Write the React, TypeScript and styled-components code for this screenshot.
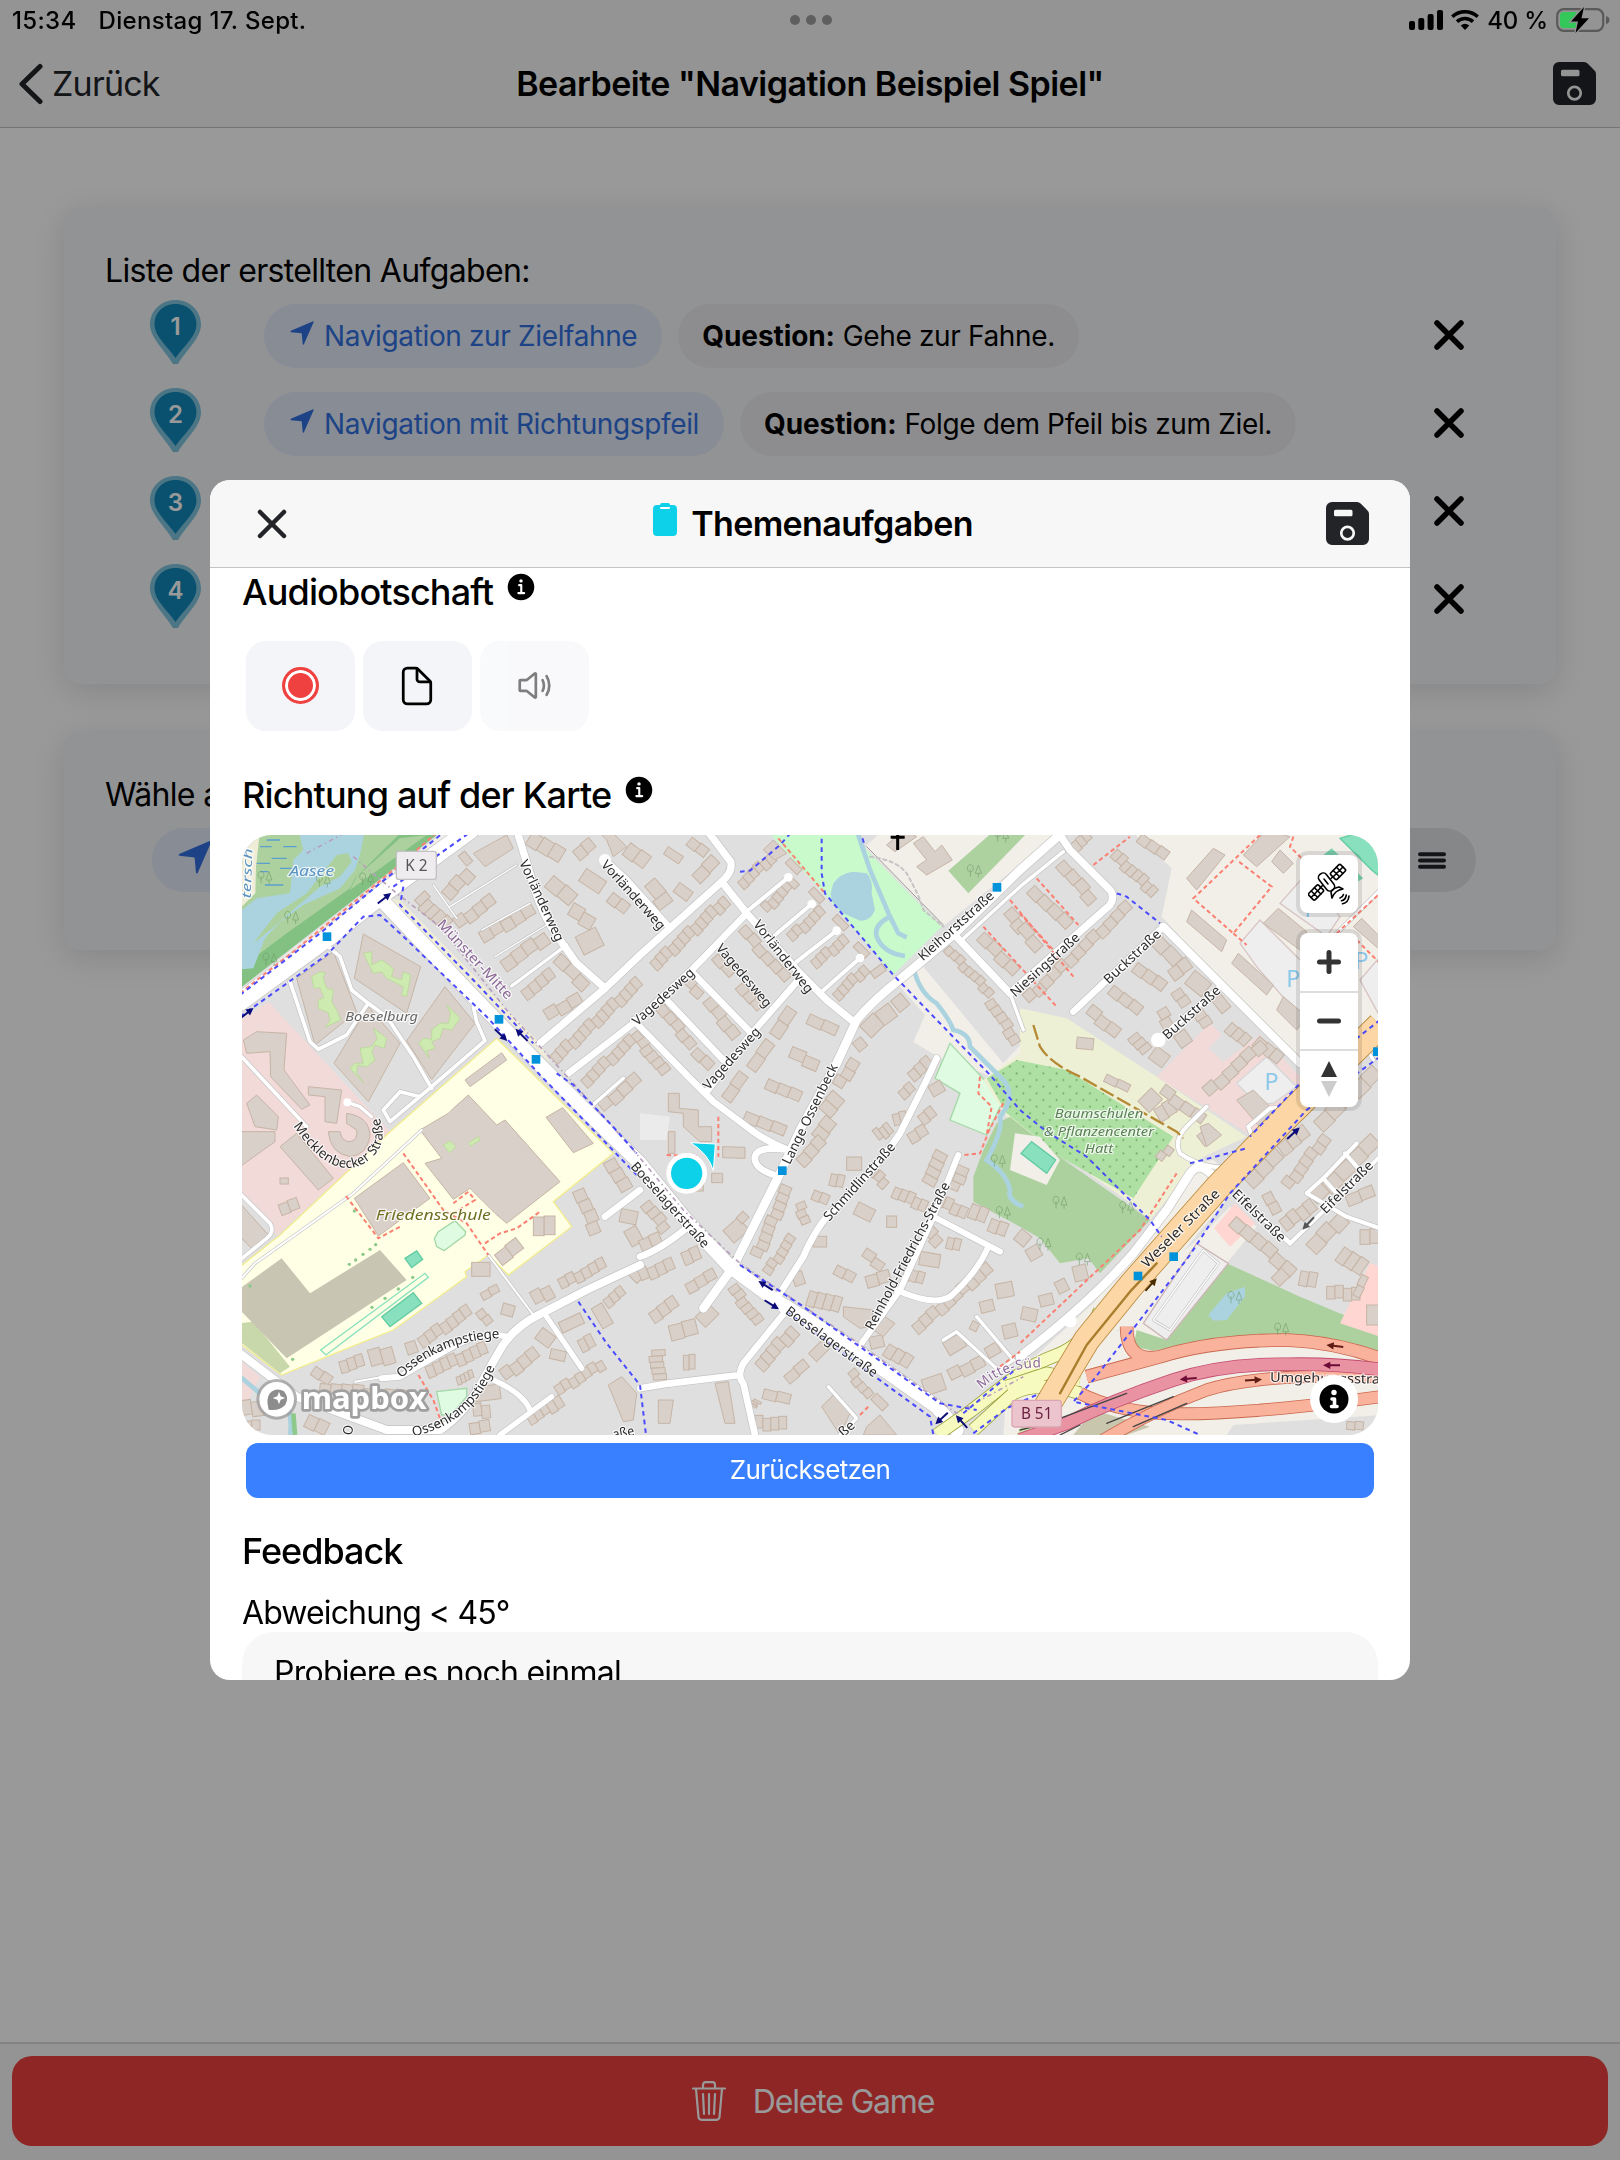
import React from "react";
import styled, { createGlobalStyle, css } from "styled-components";
import { IoDocumentOutline, IoInformationCircle, IoVolumeMediumOutline } from "react-icons/io5";

const GlobalStyle = createGlobalStyle`
  * { box-sizing: border-box; }
  body {
    margin: 0;
    background: #fff;
    color: #000;
    font-family: Inter, "Liberation Sans", sans-serif;
    -webkit-font-smoothing: antialiased;
  }
`;

const Page = styled.div`
  display: flex;
  flex-direction: column;
  height: 2160px;
  overflow: hidden;
`;

const Header = styled.header`
  height: 128px;
  background: #f7f7f7;
  border-bottom: 1px solid #c4c4c4;
`;

const StatusBar = styled.div`
  position: relative;
  z-index: 3;
  display: grid;
  grid-template-columns: 1fr auto 1fr;
  align-items: center;
  height: 40px;
  padding: 0 10px 0 12px;
  font-size: 24px;
  font-weight: 500;
`;

const StatusGroup = styled.div<{ $gap: number; $end?: boolean }>`
  display: flex;
  align-items: center;
  gap: ${(p) => p.$gap}px;
  justify-content: ${(p) => (p.$end ? "flex-end" : "flex-start")};
  letter-spacing: ${(p) => (p.$end ? -0.2 : 0.33)}px;
  white-space: nowrap;
`;

const Dot = styled.i`
  width: 10px;
  height: 10px;
  border-radius: 50%;
  background: #5f5f5f;
`;

const NavBar = styled.div`
  display: grid;
  grid-template-columns: 1fr auto 1fr;
  align-items: center;
  height: 87px;
  padding: 0 24px 0 18px;
`;

const BackButton = styled.div`
  display: flex;
  align-items: center;
  gap: 8px;
  color: #222428;
  font-size: 34px;
  letter-spacing: -0.8px;
`;

const BarTitle = styled.h1<{ $spacing: number; $shift: number }>`
  display: flex;
  align-items: center;
  margin: 0 0 0 ${(p) => p.$shift}px;
  font-size: 34px;
  font-weight: 600;
  letter-spacing: ${(p) => p.$spacing}px;
  white-space: nowrap;
`;

const BarEnd = styled.div`
  display: flex;
  justify-content: flex-end;
`;

const Content = styled.main`
  display: flex;
  flex: 1;
  flex-direction: column;
  gap: 47px;
  padding: 79px 64px 0;
`;

const Card = styled.section<{ $height: number; $top: number }>`
  height: ${(p) => p.$height}px;
  padding: ${(p) => p.$top}px 42px 0 41px;
  border-radius: 16px;
  background: #f4f5f8;
  box-shadow: 0 8px 32px rgba(0, 0, 0, 0.12);
`;

const CardLabel = styled.div`
  height: 44px;
  font-size: 32px;
  line-height: 46px;
  letter-spacing: -0.67px;
  white-space: nowrap;
`;

const TaskRow = styled.div`
  display: flex;
  align-items: center;
  height: 88px;
  padding: 0 50px 2px 45px;
`;

const PinIcon = styled.svg`
  flex: none;
  width: 51px;
  height: 64px;
  margin: -6px 63px 0 0;
`;

const Chips = styled.div`
  display: flex;
  gap: 16px;
  margin: 2px auto 0 0;
`;

const Chip = styled.div<{ $primary?: boolean; $width?: number }>`
  display: flex;
  align-items: center;
  gap: 8px;
  height: 64px;
  padding: 0 24px 1px;
  border-radius: 32px;
  background: rgba(0, 0, 0, 0.035);
  font-size: 28px;
  letter-spacing: -0.36px;
  white-space: nowrap;

  b { letter-spacing: -0.1px; }

  ${(p) =>
    p.$primary &&
    css`
      gap: 10px;
      padding: 0 25px 1px 26px;
      background: rgba(56, 128, 255, 0.1);
      color: #3171e0;
    `}
  ${(p) => p.$width && css`width: ${p.$width}px;`}
`;

const ChipArrow = styled.svg<{ $size: number }>`
  width: ${(p) => p.$size}px;
  height: ${(p) => p.$size}px;
  margin-top: -6px;
`;

const PickerRow = styled.div`
  display: flex;
  justify-content: space-between;
  padding: 12px 38px 0 47px;
`;

const MenuChip = styled(Chip)`
  justify-content: flex-end;
  width: 200px;
  padding: 0 30px;
  background: rgba(0, 0, 0, 0.08);
`;

const Footer = styled.footer`
  height: 118px;
  padding: 12px;
  border-top: 2px solid #dadada;
  background: #f7f7f7;
`;

const DeleteButton = styled.div`
  display: flex;
  align-items: center;
  justify-content: center;
  gap: 27px;
  height: 90px;
  padding-left: 6px;
  border-radius: 20px;
  background: #ed4040;
  color: #fff;
  font-size: 32px;
  letter-spacing: -1.2px;
`;

const Backdrop = styled.div`
  position: fixed;
  inset: 0;
  z-index: 2;
  display: flex;
  align-items: center;
  justify-content: center;
  background: rgba(0, 0, 0, 0.4);
`;

const Modal = styled.div`
  width: 1200px;
  height: 1200px;
  overflow: hidden;
  border-radius: 20px;
  background: #fff;
`;

const ModalHeader = styled.div`
  display: grid;
  grid-template-columns: 1fr auto 1fr;
  align-items: center;
  height: 88px;
  padding: 0 41px 0 47px;
  border-bottom: 1px solid #c4c4c4;
  background: #f7f7f7;
`;

const Clipboard = styled.svg`
  width: 24px;
  height: 33px;
  margin: -9px 14px 0 0;
`;

const ModalBody = styled.div`
  display: flex;
  flex-direction: column;
  padding: 0 32px;
`;

const SectionTitle = styled.h2<{ $top: number; $spacing: number }>`
  display: flex;
  align-items: center;
  gap: 11px;
  margin: ${(p) => p.$top}px 0 0;
  font-size: 36px;
  font-weight: 500;
  line-height: 48px;
  letter-spacing: ${(p) => p.$spacing}px;

  svg { margin-top: -11px; }
`;

const AudioRow = styled.div`
  display: flex;
  gap: 8px;
  margin: 25px 4px 0;
`;

const AudioButton = styled.div<{ $disabled?: boolean }>`
  display: flex;
  align-items: center;
  justify-content: center;
  width: 109px;
  height: 90px;
  padding: 0 1px 1px 0;
  border-radius: 20px;
  background: #f4f5f8;
  opacity: ${(p) => (p.$disabled ? 0.5 : 1)};
`;

const RecordDot = styled.i`
  width: 37px;
  height: 37px;
  border: 3px solid #f04141;
  border-radius: 50%;
  background: #f04141;
  box-shadow: inset 0 0 0 3px #fff;
`;

const MapFrame = styled.div`
  position: relative;
  height: 600px;
  margin-top: 16px;
  overflow: hidden;
  border-radius: 30px;
`;

const MapCanvas = styled.svg`
  display: block;
  width: 1136px;
  height: 600px;
  font-family: "Noto Sans", "Open Sans", sans-serif;
`;

const MapControls = styled.div`
  position: absolute;
  top: 20px;
  right: 20px;
  display: flex;
  flex-direction: column;
  gap: 20px;
`;

const ControlGroup = styled.div`
  display: flex;
  flex-direction: column;
  width: 58px;
  border-radius: 8px;
  background: #fff;
  box-shadow: 0 0 0 4px rgba(0, 0, 0, 0.1);
`;

const Control = styled.div`
  display: flex;
  align-items: center;
  justify-content: center;
  height: 58px;

  & + & { border-top: 2px solid #ddd; }
`;

const MapInfo = styled.div`
  position: absolute;
  right: 20px;
  bottom: 12px;
  display: flex;
  align-items: center;
  justify-content: center;
  width: 48px;
  height: 48px;
  border-radius: 50%;
  background: #fff;
`;

const ResetButton = styled.div`
  height: 55px;
  margin: 8px 4px 0;
  border-radius: 12px;
  background: #3880ff;
  color: #fff;
  font-size: 26px;
  line-height: 54px;
  letter-spacing: -0.6px;
  text-align: center;
`;

const FieldLabel = styled.div`
  height: 40px;
  margin-top: 17px;
  font-size: 32px;
  line-height: 42px;
  letter-spacing: -0.88px;
`;

const FieldBox = styled.div`
  height: 120px;
  padding: 21px 32px;
  border-radius: 32px;
  background: #f7f7f7;
  font-size: 32px;
  line-height: 40px;
  letter-spacing: -0.75px;
`;

const SaveIcon = () => (
  <svg width="43" height="43" viewBox="0 0 43 43">
    <path
      fillRule="evenodd"
      fill="#222428"
      d="M6 0H31a5 5 0 0 1 3.600 1.500L41.500 8.400A5 5 0 0 1 43 12V37a6 6 0 0 1-6 6H6a6 6 0 0 1-6-6V6A6 6 0 0 1 6 0ZM9.500 7.800a1.500 1.500 0 0 0-1.500 1.500v3.400a1.500 1.500 0 0 0 1.500 1.500H25a1.500 1.500 0 0 0 1.500-1.500V9.300a1.500 1.500 0 0 0-1.500-1.500ZM21.500 23.500a7.600 7.600 0 1 0 0 15.200 7.600 7.600 0 1 0 0-15.200ZM21.500 26.200a4.900 4.900 0 1 1 0 9.800 4.900 4.900 0 1 1 0-9.800Z"
    />
  </svg>
);

const Cross = ({ size, color, width }: { size: number; color: string; width: number }) => (
  <svg width={size} height={size} viewBox={`0 0 ${size} ${size}`}>
    <path
      d={`M3 3L${size - 3} ${size - 3}M${size - 3} 3L3 ${size - 3}`}
      stroke={color}
      strokeWidth={width}
      strokeLinecap="round"
    />
  </svg>
);

const Arrow = ({ size }: { size: number }) => (
  <ChipArrow $size={size} viewBox="0 0 24 24">
    <path d="M.8 9.800L23.200.3Q24 0 23.700.9L13.800 23.500Q12.900 24 12.700 23L11.700 12.300 1 11.200Q0 10.500.8 9.800Z" fill="#3171e0" />
  </ChipArrow>
);

const Pin = ({ n }: { n: number }) => (
  <PinIcon viewBox="0 0 51 64">
    <path d="M25.500 0C11.500 0 0 10.500 0 24.500 0 38 14 49 23 64H28C37 49 51 38 51 24.500 51 10.500 39.500 0 25.500 0Z" fill="#7fc4de" />
    <path d="M25.500 4C13.500 4 4.500 12.500 4.500 24.500 4.500 36 17 46 25.500 58 34 46 46.500 36 46.500 24.500 46.500 12.500 37.500 4 25.500 4Z" fill="#1088ba" />
    <text x="25.500" y="34.500" fill="#fff" fontSize="24" fontWeight="600" textAnchor="middle">{n}</text>
  </PinIcon>
);

/* ---------- map data, in thirds of a pixel ---------- */

type Area = [fill: string, points: string, stroke?: string];

const AREAS: Area[] = [
  ["#add19e", "0,0 590,0 0,470"],
  ["#83c183", "490,0 610,0 0,475 0,415 140,310 330,175 345,145"],
  ["#add19e", "480,25 560,15 330,180 350,140"],
  ["#f2efe9", "0,480 600,15 700,0 0,540"],
  ["#efedd8", "0,0 60,0 48,110 46,190 0,235"],
  ["#aad3df", "175,0 375,0 360,75 345,120 300,175 190,225 120,275 75,325 40,415 0,418 0,245 50,205 150,190 160,90 190,60"],
  ["#add19e", "290,75 325,70 335,95 300,140 240,170 90,300 40,340 110,250 200,190"],
  ["#efedd8", "440,205 480,210 900,640 930,700 560,320 430,220"],
  ["#f2dad9", "0,570 85,515 450,905 110,1218 90,1190 0,1080"],
  ["#ffffe5", "770,625 1120,970 940,1115 995,1190 805,1335 745,1275 675,1325 680,1340 460,1500 285,1570 125,1635 0,1540 0,1310 120,1215 450,905", "#f2ec90"],
  ["#c8d8ab", "0,1480 40,1475 150,1610 120,1630 0,1535"],
  ["#f2dad9", "0,1590 60,1640 20,1720 0,1720"],
  ["#c8c6b2", "125,1285 210,1390 420,1260 500,1350 140,1585 0,1440 0,1375"],
  ["#c8facc", "1580,0 1840,0 1880,60 2105,290 1960,435 1760,200"],
  ["#f2efe9", "1875,50 1930,0 2470,0 2110,288"],
  ["#aed1a0", "2125,122 2265,0 2370,0 2185,190"],
  ["#f2efe9", "2040,395 2140,460 2300,600 2540,700 2520,920 2230,730 2110,690 2020,635 2055,555 1980,470"],
  ["#dfdfdf", "2050,410 2170,330 2360,520 2365,620 2290,700"],
  ["#dffce2", "2130,640 2290,810 2240,915 2130,870 2160,790 2085,745", "#a5d8a8"],
  ["#eef0d5", "2340,535 2480,565 2750,740 3020,920 2890,980 2730,1170 2660,1110 2300,860 2230,750 2340,670"],
  ["#aedfa3", "2240,745 2330,690 2480,720 2800,920 2680,1105 2460,980 2300,850"],
  ["#add19e", "2200,1115 2200,1040 2230,960 2270,880 2310,860 2465,985 2730,1170 2580,1330 2545,1285 2460,1300 2400,1225 2340,1190"],
  ["#f2efe9", "2325,910 2400,920 2460,990 2420,1065 2310,1020"],
  ["#88e0be", "2375,935 2447,990 2420,1030 2343,970", "#62cba2"],
  ["#f2efe9", "2670,0 3420,0 3420,580 3170,700 2765,260 2795,115"],
  ["#f2dad9", "2750,740 2910,580 2945,615 2905,655 2950,695 3060,615 3190,750 3040,920"],
  ["#f2efe9", "2870,1000 2920,990 3000,1060 2600,1540 2340,1620 2560,1420 2790,1130"],
  ["#f2efe9", "2550,1480 2860,1240 2970,1130 3050,1190 2960,1300 2780,1530"],
  ["#ffd6d1", "2985,1120 3045,1180 2970,1250 2922,1195"],
  ["#f2efe9", "2290,1815 2300,1660 2640,1500 3420,1520 3420,1815"],
  ["#add19e", "2960,1300 3180,1400 3420,1500 3420,1590 3140,1525 2900,1535 2740,1562 2680,1550 2690,1500 2780,1530"],
  ["#ffd6d1", "3390,1300 3420,1310 3420,1520 3300,1480"],
  ["#cfe7b0", "2330,1815 2400,1690 2480,1690 2430,1815"],
  ["#c9c6ae", "2560,1740 2730,1790 2660,1815 2500,1815"],
  ["#dfdfdf", "2980,1785 3420,1755 3420,1815 2960,1815"],
  ["#eeeeee", "2710,1480 2870,1240 2965,1300 2780,1530", "#cdb6b6"],
  ["#eeeeee", "3000,340 3060,270 3190,400 3280,480 3180,560 3050,410", "#d8c4c4"],
  ["#eeeeee", "3120,220 3200,130 3300,260 3260,320", "#d8c4c4"],
  ["#eeeeee", "2990,760 3080,680 3170,770 3100,820 3050,820", "#d6d6d6"],
  ["#eeeeee", "3360,450 3420,380 3420,560", "#d8c4c4"],
  ["#88e0be", "3300,25 3350,10 3420,60 3420,140 3395,120", "#62cba2"],
  ["#7dd3b0", "3250,75 3275,55 3370,145 3345,160"],
  ["#ebebeb", "1200,850 1290,860 1280,930 1200,930"],
  ["#88e0be", "425,1460 520,1388 545,1420 450,1490", "#62cba2"],
  ["#88e0be", "495,1285 530,1263 548,1288 515,1313", "#62cba2"],
  ["none", "242,1560 555,1330 565,1342 258,1575", "#88e0be"],
  ["#dffce2", "583,1225 595,1205 645,1172 677,1205 675,1215 612,1262 590,1250", "#a5d8a8"],
  ["#dffce2", "590,1685 680,1675 680,1700 635,1752 605,1755", "#a5d8a8"],
  ["#aad3df", "2905,1455 2960,1390 3015,1370 3015,1400 2960,1470 2920,1472"],
];

const BLOCKS = [
  "370,312 542,410 500,550 343,445",
  "280,365 350,545 225,645 170,445",
  "385,530 480,640 385,815 282,700",
  "615,470 705,580 575,748 500,632",
  "10,630 50,605 140,610 132,720 210,825 185,838 92,740 90,665 20,670",
  "20,820 50,795 115,860 110,900 45,890",
  "205,770 305,780 290,880 255,875 255,800 205,795",
  "0,905 105,905 105,935 0,1010",
  "120,950 170,910 280,1045 235,1080",
  "0,1120 90,1220 40,1260 0,1220",
  "540,900 625,850 640,835 685,795 770,885 795,870 960,1055 800,1180 765,1150 690,1075 640,1108 555,1000 605,985",
  "490,998 570,1105 415,1218 343,1105",
  "675,750 785,668 800,690 690,770",
  "918,862 968,833 1060,940 1000,968",
  "1285,790 1318,790 1318,835 1375,840 1375,890 1415,890 1415,935 1380,935 1330,890 1330,850 1285,845",
  "1285,905 1305,905 1305,970 1285,970",
  "1448,950 1515,952 1515,985 1448,983",
  "1415,1030 1448,1030 1448,1058 1415,1058",
  "2030,110 2060,90 2020,40 2050,20 2085,65 2105,45 2137,90 2060,135",
  "1940,45 1990,0 2030,20 1965,65",
  "1570,60 1600,30 1640,70 1605,90",
  "1100,30 1080,10 1110,0 1160,50 1120,80",
  "700,70 800,15 820,55 735,110",
  "1105,1665 1145,1640 1190,1690 1180,1770 1150,1775",
  "1255,1710 1300,1710 1290,1780 1255,1780",
  "1425,1660 1465,1655 1485,1780 1455,1780",
  "1745,1730 1785,1690 1830,1750 1800,1815",
  "1880,1790 1920,1755 1970,1815 1870,1815",
  "1810,1430 1900,1440 1890,1490 1860,1495 1810,1460",
  "1920,1450 1965,1480 1930,1520 1900,1500",
  "2990,810 3040,780 3130,870 3080,915",
  "2840,145 2920,55 2955,75 2870,180",
  "2855,240 2960,330 2945,365 2840,275",
  "2995,370 3100,465 3080,495 2975,400",
  "3070,280 3115,235 3200,305 3180,360",
  "3010,75 3080,0 3150,20 3050,110",
  "3095,95 3120,60 3160,100 3130,130",
  "3110,540 3130,500 3200,560 3170,600",
  "3340,290 3365,265 3420,320 3420,360",
  "2880,890 2905,880 2945,915 2900,950",
];

const LAWNS = [
  "370,370 395,365 395,405 425,390 460,415 455,440 485,450 490,425 512,435 500,500 485,495 490,470 440,445 425,425 400,430",
  "215,440 240,425 255,428 250,445 260,475 280,480 275,515 290,540 302,570 255,592 270,572 265,548 235,535 235,510 252,503 240,473 222,475",
  "400,595 440,625 432,655 405,645 395,665 405,690 380,710 352,705 350,730 372,760 330,715 345,700 370,700 360,655 395,650 412,625",
  "620,525 660,565 635,600 608,595 600,625 575,635 585,655 560,662 568,685 537,640 550,625 575,628 575,600 600,580 625,580 632,550",
  "610,945 630,932 648,950 628,968",
  "685,940 715,920 720,930 692,948",
];

/* x1, y1, x2, y2, number of houses, depth */
type HouseRow = [number, number, number, number, number, number];

const HOUSES: HouseRow[] = [
  [535, 200, 620, 290, 5, 42], [620, 200, 690, 125, 3, 38], [665, 70, 690, 100, 1, 24], [870, 20, 965, 80, 3, 45],
  [650, 285, 760, 205, 4, 34], [725, 325, 880, 235, 5, 36], [790, 410, 920, 320, 4, 38], [850, 495, 940, 430, 4, 34],
  [920, 560, 1020, 500, 3, 34], [950, 385, 1040, 470, 3, 36], [940, 690, 1200, 455, 15, 34], [930, 150, 1000, 210, 2, 44],
  [990, 240, 1060, 280, 2, 40], [1020, 350, 1080, 320, 1, 60], [1110, 200, 1160, 240, 2, 34], [1030, 760, 1200, 610, 9, 32],
  [1085, 835, 1195, 740, 4, 34], [1010, 80, 1060, 40, 2, 36], [1160, 55, 1220, 100, 2, 44], [1030, 130, 1090, 170, 1, 44],
  [1225, 160, 1260, 200, 1, 40], [1370, 150, 1430, 90, 2, 36], [1310, 170, 1350, 200, 1, 34], [1350, 30, 1400, 70, 2, 30],
  [1275, 65, 1320, 95, 1, 26], [1250, 230, 1290, 200, 1, 34], [1240, 410, 1460, 210, 13, 34], [1500, 165, 1600, 80, 6, 30],
  [1575, 240, 1665, 150, 6, 30], [1650, 325, 1750, 240, 6, 30], [1720, 405, 1820, 325, 6, 30], [1785, 500, 1880, 415, 6, 30],
  [1640, 95, 1675, 130, 1, 22], [1712, 180, 1745, 215, 1, 22], [1785, 260, 1820, 295, 1, 22], [1850, 340, 1885, 375, 1, 22],
  [1900, 440, 1935, 415, 1, 24], [1505, 295, 1640, 450, 6, 30], [1425, 380, 1475, 435, 2, 26], [1500, 465, 1560, 535, 3, 30],
  [1335, 450, 1385, 495, 2, 28], [1400, 510, 1490, 620, 4, 34], [1260, 530, 1360, 650, 5, 30], [1365, 660, 1415, 710, 2, 30],
  [1200, 630, 1275, 730, 5, 34], [1605, 620, 1660, 540, 2, 36], [1705, 565, 1790, 605, 2, 32], [1530, 715, 1590, 635, 2, 34],
  [1650, 670, 1735, 705, 2, 34], [1460, 810, 1515, 735, 2, 34], [1580, 760, 1680, 805, 3, 32], [1515, 855, 1635, 905, 3, 32],
  [1880, 610, 1920, 570, 1, 50], [1920, 570, 1960, 540, 1, 48], [1965, 530, 1995, 505, 1, 44], [1845, 650, 1870, 630, 1, 34],
  [1795, 770, 1845, 690, 3, 34], [1755, 850, 1800, 800, 2, 48], [1730, 925, 1775, 870, 2, 42], [2010, 740, 2070, 690, 3, 34],
  [2075, 790, 2110, 770, 1, 36], [1985, 800, 2020, 770, 2, 30], [1960, 870, 2000, 860, 2, 34], [2040, 870, 2080, 840, 2, 34],
  [1910, 920, 1950, 890, 3, 36], [2010, 930, 2060, 900, 2, 34], [2120, 355, 2255, 495, 9, 26], [2250, 510, 2330, 640, 6, 30],
  [2300, 245, 2350, 300, 2, 34], [2220, 320, 2330, 425, 4, 34], [2460, 100, 2560, 215, 4, 34], [2375, 175, 2485, 290, 4, 34],
  [2340, 290, 2400, 355, 2, 34], [2620, 70, 2745, 190, 8, 32], [2500, 55, 2550, 15, 3, 32], [2700, 20, 2780, 80, 3, 30],
  [2360, 510, 2670, 225, 13, 32], [2740, 325, 2810, 400, 2, 40], [2685, 410, 2770, 475, 3, 34], [2615, 475, 2700, 545, 3, 32],
  [2545, 540, 2635, 610, 3, 34], [2795, 440, 2850, 400, 2, 38], [2850, 440, 2900, 480, 1, 50], [2810, 480, 2840, 525, 2, 34],
  [2760, 540, 2790, 590, 2, 32], [2870, 545, 2900, 590, 2, 34], [2920, 490, 2960, 540, 1, 34], [2680, 615, 2720, 665, 3, 36],
  [2735, 670, 2775, 700, 1, 44], [2815, 610, 2840, 645, 1, 40], [2965, 590, 3020, 640, 3, 36], [3050, 630, 3120, 690, 3, 36],
  [2900, 790, 3070, 640, 6, 34], [2510, 640, 2560, 645, 1, 34], [2710, 830, 2750, 790, 1, 48], [2750, 855, 2800, 825, 2, 44],
  [2765, 780, 2890, 870, 4, 32], [2595, 745, 2665, 780, 2, 24], [3235, 890, 3410, 720, 5, 44],
  [300, 1610, 370, 1590, 3, 36], [390, 1590, 460, 1570, 2, 50], [500, 1560, 530, 1550, 1, 36], [540, 1540, 690, 1440, 7, 34],
  [560, 1625, 740, 1555, 8, 36], [880, 1410, 935, 1380, 2, 40], [960, 1365, 1095, 1300, 6, 32], [1015, 1080, 1070, 1210, 4, 36],
  [1110, 990, 1160, 1080, 3, 38], [1140, 1160, 1190, 1170, 1, 40], [1165, 1230, 1200, 1210, 1, 52], [725, 1400, 775, 1375, 2, 24],
  [720, 1440, 750, 1480, 2, 26], [785, 1440, 820, 1450, 1, 34], [695, 1320, 750, 1320, 1, 42], [775, 1290, 840, 1240, 2, 40],
  [880, 1185, 945, 1185, 2, 56], [790, 1640, 890, 1565, 4, 36], [950, 1685, 1090, 1600, 7, 30], [865, 1770, 965, 1710, 5, 36],
  [700, 1690, 780, 1680, 1, 44], [700, 1745, 750, 1740, 2, 38], [690, 1800, 750, 1790, 2, 34], [220, 1620, 270, 1655, 2, 30],
  [240, 1670, 500, 1700, 8, 28], [0, 1740, 70, 1730, 2, 44], [10, 1790, 60, 1790, 2, 30], [200, 1770, 260, 1800, 2, 40],
  [960, 1490, 1025, 1460, 1, 34], [1065, 1430, 1100, 1490, 1, 36], [895, 1510, 935, 1540, 1, 40], [1020, 1550, 1060, 1530, 2, 40],
  [1095, 1420, 1150, 1380, 3, 30], [1180, 1350, 1200, 1330, 1, 40], [120, 1055, 145, 1055, 1, 18], [120, 1140, 175, 1120, 2, 34],
  [650, 1650, 700, 1635, 4, 24], [930, 1575, 975, 1585, 1, 30], [1330, 1070, 1390, 1070, 1, 30],
  [1215, 1120, 1280, 1200, 4, 34], [1200, 1245, 1260, 1220, 2, 34], [1200, 1340, 1300, 1300, 4, 36], [1330, 1290, 1380, 1270, 2, 40],
  [1235, 1465, 1310, 1415, 3, 36], [1340, 1375, 1425, 1330, 3, 32], [1385, 1480, 1425, 1440, 1, 44], [1475, 1370, 1555, 1480, 6, 32],
  [1465, 1220, 1510, 1180, 1, 50], [1495, 1170, 1515, 1150, 1, 26], [1550, 1280, 1645, 1070, 9, 34], [1580, 1330, 1660, 1220, 6, 28],
  [1290, 1510, 1370, 1490, 2, 46], [1555, 1610, 1665, 1500, 6, 38], [1250, 1560, 1255, 1650, 5, 40], [1330, 1600, 1365, 1600, 2, 44],
  [1680, 1000, 1750, 930, 3, 36], [1720, 1090, 1765, 1110, 2, 30], [1675, 1120, 1700, 1180, 3, 28], [1770, 1050, 1810, 1060, 2, 36],
  [1820, 1000, 1865, 1000, 1, 40], [1850, 1130, 1900, 1155, 1, 40], [1940, 1180, 1970, 1180, 1, 34], [1890, 1020, 1940, 1065, 3, 30],
  [1960, 1085, 2060, 1130, 5, 34], [2060, 1060, 2110, 970, 4, 40], [2140, 1080, 2170, 1010, 3, 36], [2090, 1110, 2180, 1150, 4, 34],
  [2190, 1140, 2240, 1160, 2, 44], [2250, 1180, 2300, 1200, 2, 40], [1720, 1240, 1760, 1240, 1, 32], [1785, 1320, 1840, 1350, 2, 30],
  [1660, 1350, 1690, 1340, 1, 40], [1705, 1400, 1800, 1430, 4, 46], [1870, 1270, 1930, 1310, 2, 28], [1880, 1360, 1950, 1340, 2, 36],
  [1990, 1330, 2050, 1350, 3, 34], [2040, 1280, 2100, 1290, 1, 40], [2060, 1200, 2100, 1240, 2, 34], [2120, 1240, 2160, 1250, 2, 34],
  [2025, 1500, 2250, 1310, 10, 34], [2220, 1430, 2260, 1420, 1, 34], [2270, 1390, 2320, 1380, 1, 44], [2290, 1510, 2330, 1500, 1, 40],
  [1890, 1540, 1930, 1530, 1, 36], [1940, 1555, 2010, 1600, 3, 40], [1830, 1625, 1890, 1700, 4, 26], [1900, 1700, 1935, 1735, 1, 26],
  [1640, 1650, 1700, 1600, 2, 30], [1715, 1580, 1755, 1540, 1, 34], [1545, 1780, 1640, 1780, 4, 38], [1540, 1730, 1550, 1710, 3, 24],
  [1570, 1690, 1650, 1710, 2, 30], [2050, 1670, 2110, 1650, 1, 50], [2130, 1640, 2230, 1590, 3, 34], [2120, 1560, 2170, 1530, 1, 44],
  [2240, 1570, 2275, 1550, 1, 34], [2195, 1480, 2215, 1490, 1, 26], [2330, 1215, 2360, 1240, 1, 40], [2365, 1280, 2400, 1260, 1, 38],
  [2450, 1375, 2480, 1360, 1, 38], [2500, 1330, 2540, 1320, 1, 46], [2400, 1420, 2440, 1410, 1, 34], [2345, 1450, 2390, 1460, 1, 38],
  [3025, 1060, 3120, 970, 3, 44], [3120, 960, 3200, 900, 3, 40], [3140, 1070, 3260, 920, 7, 34], [3130, 1190, 3220, 1120, 4, 40],
  [3080, 1090, 3110, 1150, 2, 30], [2980, 1170, 3160, 1330, 6, 36], [3220, 1110, 3410, 930, 5, 44], [3215, 1260, 3310, 1160, 3, 44],
  [3300, 1270, 3370, 1320, 3, 50], [3180, 1340, 3230, 1350, 2, 44], [3110, 1360, 3140, 1330, 1, 36], [3260, 1390, 3360, 1390, 4, 38],
  [3360, 1220, 3420, 1220, 2, 44], [3320, 1110, 3400, 1080, 2, 34], [3380, 1460, 3420, 1460, 1, 60], [3350, 1400, 3380, 1340, 2, 22],
  [3320, 1785, 3370, 1790, 2, 24], [2880, 930, 2920, 900, 1, 40], [2760, 990, 2790, 950, 2, 24],
];

type Road = [d: string, width: number];

const ROADS: Road[] = [
  ["M0 515L260 325 430 190 690 0", 54],
  ["M430 215L700 500 880 685 1050 855 1200 1000 1330 1160 1470 1310 1620 1420 1840 1555 2090 1730 2150 1800", 42],
  ["M830 0L870 130Q900 250 960 330L1010 400 1095 475", 22],
  ["M900 640L1095 475 1200 375 1445 155Q1480 125 1472 95L1400 0", 22],
  ["M1095 90L1160 150 1290 295", 20],
  ["M985 730L1180 580 1360 415 1520 250", 20],
  ["M1445 155L1520 250 1680 430 1760 510 1840 575", 22],
  ["M1520 245L1645 142M1605 315L1715 222M1670 395L1790 302M1745 485L1860 384", 12],
  ["M1360 430L1530 605M1285 515L1450 690", 20],
  ["M1400 785L1540 605 1675 450", 20],
  ["M1180 570L1350 745 1420 815 1520 890Q1570 930 1640 958L1590 955Q1540 960 1545 990 1550 1020 1610 1037", 20],
  ["M2470 5L2340 120 2145 310 1990 440Q1900 510 1850 570L1790 700 1680 900 1625 1020 1480 1310 1390 1435", 26],
  ["M2460 15L2490 60 2600 170Q2630 195 2610 225L2480 340 2310 490", 22],
  ["M2135 305L2310 490", 22],
  ["M2160 335L2340 170 2470 65M2310 490L2350 600", 10],
  ["M2770 290L2500 545", 20],
  ["M2770 290L2940 460 3180 700", 24],
  ["M2940 470L2755 630", 16],
  ["M150 455L210 635 235 658 320 615 385 520M260 345L300 380 335 480 385 520 440 560 520 680 575 775M700 530L710 575 735 632 575 770 450 875 430 840 480 785 540 800", 11],
  ["M0 675L200 890M0 1090L90 1180Q105 1205 80 1225L0 1290", 11],
  ["M322 817L360 830 395 860", 10],
  ["M630 230L830 105M725 300L870 220M765 380L920 285M580 165L650 265", 4],
  ["M815 468L980 345", 10],
  ["M1055 828L1150 745", 10],
  ["M1095 1160L1200 1080M1200 1280Q1260 1260 1345 1190", 20],
  ["M2090 685L2060 750 1980 910Q1940 970 1860 1060L1760 1160Q1720 1210 1690 1280L1620 1390", 20],
  ["M1620 1420L1640 1440 1510 1600Q1490 1640 1510 1660L1545 1815M1290 1660L1500 1635", 20],
  ["M1290 1660L1200 1675", 20],
  ["M2155 975L2080 1160 1980 1380 1850 1560", 18],
  ["M2080 1160L2280 1265M2245 1250Q2210 1330 2130 1400 2080 1430 1970 1380", 18],
  ["M1200 1305L1040 1380 905 1450Q820 1490 780 1560L740 1630Q680 1750 600 1800L440 1800 170 1700 0 1570", 24],
  ["M800 1520Q720 1500 620 1560L480 1640 425 1645", 18],
  ["M920 1460L1025 1615M760 1650Q850 1690 870 1740M780 1815L935 1700", 16],
  ["M345 1655L430 1640M745 1275L880 1455M545 900L340 1090 45 1300 0 1350", 6],
  ["M1765 1670L1850 1765 1800 1815M2110 1530L2150 1505 2280 1625M2210 1460L2320 1590 2270 1625", 10],
  ["M2920 1040Q2880 990 2850 1030L2780 1140 2680 1270Q2550 1420 2340 1580", 26],
  ["M3025 1020L2920 1010Q2860 1000 2820 970 2800 930 2840 890L2900 830M3040 930L3025 890 3090 835 3170 830", 12],
  ["M3150 1240L2990 1090", 14],
  ["M3150 1240L3420 980M3200 1090L3250 1045 3350 940M3200 1090L3320 1160 3420 1195M3250 1045L3290 1090M3315 970L3350 1010", 12],
  ["M3280 320L3420 180", 10],
  ["M3420 600L3370 640 3400 690", 10],
  ["M2740 1470L2890 1260 2935 1300 2790 1500Z", 4],
];

const TURNING = [[1095, 90, 18], [1645, 142, 13], [1715, 222, 13], [1790, 302, 13], [1860, 384, 13], [2755, 630, 22], [2490, 1472, 20], [322, 817, 12]];

type Major = [d: string, width: number, fill: string, edge: string];

const MAJORS: Major[] = [
  ["M2090 1815L2190 1745 2300 1660Q2380 1600 2450 1575 2540 1540 2580 1440", 36, "#f7fabf", "#9aa33a"],
  ["M2200 1800L2320 1690Q2400 1650 2520 1690M2300 1670L2420 1630 2520 1650", 36, "#f7fabf", "#9aa33a"],
  ["M2540 1640L2760 1580Q2920 1530 3140 1530 3280 1535 3420 1585M2660 1490Q2660 1600 2760 1580", 36, "#f9b29c", "#c9674e"],
  ["M2520 1690Q2620 1740 2760 1750 2980 1760 3420 1700", 34, "#f9b29c", "#c9674e"],
  ["M2590 1830Q2740 1740 2900 1680 3050 1630 3420 1640", 34, "#f9b29c", "#c9674e"],
  ["M2340 1830L2480 1780Q2620 1710 2800 1650 2950 1600 3140 1603 3280 1600 3420 1618", 36, "#e892a2", "#c24a6e"],
  ["M3420 585L3120 880 2930 1075 2670 1370 2540 1530 2420 1730", 76, "#fcd6a4", "#b98a3e"],
];

const CYCLE = [
  "M0 560L260 375 370 260 420 255 480 310 740 560 900 735 1060 900 1200 1045",
  "M0 495L240 310 420 160 620 0", "M460 170L700 0", "M490 170L480 225 700 450 880 640",
  "M950 730L1000 765 1110 880 1190 970", "M1500 125L1530 122 1620 45 1660 0M1745 0L1745 130 1755 190 1960 435 2250 735 2340 840 2420 905 2540 980 2730 1170 2765 1220",
  "M1860 0L1875 50", "M2630 190L2660 200 2760 280", "M1015 1415L1100 1540 1200 1665 1218 1815",
  "M1500 1305L1690 1430 2100 1720 2210 1740M1640 1445L1850 1600 2070 1760 2080 1815", "M2170 1750L2330 1615M2200 1810L2300 1735 2400 1690",
  "M3420 570L3180 760 3030 920M3420 680L3200 840 2970 1090 2850 1275 2700 1470 2560 1650 2500 1715 2600 1735 2780 1770 2880 1815", "M2850 1000L3020 955",
];

const FOOT = [
  "M0 490L160 365 460 120 600 0", "M490 970L610 1140 680 1180 745 1275M318 1098L415 1225 480 1190M640 1120L685 1085 705 1110 640 1150M735 1240L780 1210 830 1195 900 1145",
  "M535 1635L580 1710 605 1780", "M1435 860L1435 980M1280 975L1370 978", "M1615 25L1755 190", "M2310 210L2500 440M2230 290L2450 530M2390 145L2515 285",
  "M2340 250L2440 360", "M2560 105L2670 20", "M3060 15L2860 205 2980 310 3095 170 2990 90M3160 20L3150 50 3190 90", "M2980 310L3020 345M3290 310L3420 190M3350 330L3420 400",
  "M2810 1030L2700 1200 2340 1540", "M2220 740L2215 790 2255 830 2240 915M2290 820L2240 915M2240 920L2220 970 2170 975", "M1860 1755L1890 1725", "M2280 1610L2340 1565",
];

const BOUNDARY = ["M200 70L330 0M340 80L470 190 600 290 800 540 1000 760 1180 960 1330 1140 1500 1300 1840 1530 2150 1750 2350 1640"];

const WATERLINES = [
  "M1850 0L1890 120 1950 260 1975 310 2000 322M1950 260Q1900 285 1910 320 1930 370 1995 378",
  "M2022 420Q2040 490 2090 520 2130 570 2140 600 2190 610 2190 650 2240 700 2290 750 2330 800 2280 860 2290 900 2240 990 2300 1030 2310 1080 2300 1110 2350 1130 2390 1170",
];

type Label = [text: string, x: number, y: number, angle: number, length: number, size?: number, color?: string, italic?: boolean];

const LABELS: Label[] = [
  ["Vorländerweg", 905, 212, 65, 265],
  ["Vorländerweg", 1180, 195, 48, 265],
  ["Vorländerweg", 1630, 380, 52, 265],
  ["Vagedesweg", 1512, 437, 50, 235],
  ["Vagedesweg", 1270, 500, -42, 235],
  ["Vagedesweg", 1475, 685, -48, 235],
  ["Kleihorststraße", 2148, 288, -42, 290],
  ["Lange Ossenbeck", 1710, 852, -64, 330],
  ["Niesingstraße", 2415, 405, -42, 265],
  ["Buckstraße", 2677, 380, -43, 218],
  ["Buckstraße", 2855, 548, -42, 218],
  ["Boeselagerstraße", 1290, 1125, 48, 330],
  ["Boeselagerstraße", 1775, 1535, 36, 330],
  ["Schmidlinstraße", 1858, 1055, -48, 300],
  ["Reinhold-Friedrichs-Straße", 2003, 1278, -62, 495],
  ["Weseler Straße", 2822, 1195, -45, 312],
  ["Eifelstraße", 3057, 1157, 44, 205],
  ["Eifelstraße", 3320, 1072, -45, 205],
  ["ße", 1820, 1796, -42, 50],
  ["aße", 1150, 1808, -10, 65],
  ["O", 325, 1800, -80, 30],
  ["Umgehungsstra", 3255, 1645, 1, 330],
  ["Boeselburg", 425, 562, 0, 218, 36, "#666", true],
  ["Münster-Mitte", 705, 388, 47, 310, 42, "#8d6a97"],
  ["Aasee", 215, 125, 0, 135, 42, "#5b93c2", true],
  ["tersch", 22, 130, -88, 150, 38, "#5b93c2", true],
  ["Friedensschule", 580, 1155, 0, 345, 42, "#6f6f20", true],
  ["Baumschulen", 2577, 853, 0, 265, 36, "#5a8055", true],
  ["& Pflanzencenter", 2577, 905, 0, 330, 36, "#5a8055", true],
  ["Hatt", 2577, 957, 0, 85, 36, "#5a8055", true],
];

const STOPS = [[261, 320], [777, 568], [888, 688], [2271, 172], [1627, 1022], [2694, 1338], [2801, 1280], [3412, 665]];

/* x, y, angle, colour */
const ONEWAY: [number, number, number, string][] = [
  [433, 205, -38, "#0b0b7a"], [20, 550, -38, "#0b0b7a"], [783, 615, 43, "#0b0b7a"], [845, 615, 225, "#0b0b7a"],
  [1577, 1367, 213, "#0b0b7a"], [1595, 1424, 32, "#0b0b7a"], [2105, 1765, 137, "#0b0b7a"], [2165, 1775, 228, "#0b0b7a"],
  [3160, 910, -42, "#0b0b7a"], [2733, 1364, -48, "#4a2e00"], [3285, 1548, 187, "#5f1c14"], [3275, 1606, 180, "#6d0b37"],
  [2845, 1646, 175, "#6d0b37"], [3040, 1650, -3, "#5f1c14"], [3205, 1180, 133, "#555"],
];

const TREES = [[75, 140], [250, 150], [155, 260], [380, 145], [90, 385], [1003 + 1200, 120], [2285, 15], [2460, 1115], [2660, 1130], [2530, 1285], [2412, 1240], [2985, 1400], [3125, 1495], [2275, 990], [2290, 1145]];

const PARKING = [[3160, 450], [3095, 758], [3365, 395], [3215, 240]];

const Houses = () => (
  <g fill="#d9d0c9" stroke="#c6b5a6" strokeWidth="3">
    {HOUSES.map(([x1, y1, x2, y2, n, depth], r) => {
      const length = Math.hypot(x2 - x1, y2 - y1);
      const angle = (Math.atan2(y2 - y1, x2 - x1) * 180) / Math.PI;
      const step = length / n;
      return (
        <g key={r} transform={`translate(${x1} ${y1}) rotate(${angle})`}>
          {Array.from({ length: n }, (_, i) => {
            const shift = ((i * 7 + r * 5) % 4) * 3 - 5;
            return <rect key={i} x={i * step} y={-depth / 2 + shift} width={step} height={depth} />;
          })}
        </g>
      );
    })}
  </g>
);

const CityMap = () => (
  <MapCanvas viewBox="6 15 3408 1800">
    <defs>
      <pattern id="orchard" width="40" height="40" patternUnits="userSpaceOnUse">
        <circle cx="10" cy="10" r="2.600" fill="#5c9a55" />
        <circle cx="30" cy="30" r="2.600" fill="#5c9a55" />
      </pattern>
      <path id="mecklenbecker" d="M160 888C225 985 290 1030 355 1008C440 970 445 900 400 830" />
      <path id="ossenkamp-a" d="M485 1645Q600 1530 785 1524" />
      <path id="ossenkamp-b" d="M520 1819Q700 1780 768 1605" />
      <path id="mitte-sued" d="M2225 1678Q2290 1610 2410 1612" />
    </defs>
    <rect width="3420" height="1820" fill="#dfdfdf" />
    {AREAS.map(([fill, points, stroke], i) => (
      <polygon key={i} points={points} fill={fill} stroke={stroke ?? "none"} strokeWidth="4" />
    ))}
    <polygon points="2240,745 2330,690 2480,720 2800,920 2680,1105 2460,980 2300,850" fill="url(#orchard)" />
    <g stroke="#5a9fd0" strokeWidth="4">
      <path d="M80 30H120M60 50H95M130 50H170M95 85H140M50 100H90M120 115H160M75 165H130M60 125H85" />
    </g>
    <path d="M1780 160Q1800 130 1840 125L1880 130Q1900 150 1895 190L1905 240Q1890 275 1860 272L1810 250Q1770 220 1772 190Z" fill="#aad3df" />
    <g fill="none" stroke="#aad3df" strokeWidth="14">
      {WATERLINES.map((d) => <path key={d} d={d} />)}
      <path d="M130 1700Q160 1760 150 1815M0 1640L60 1690" />
    </g>
    <path d="M160 1750L165 1815" stroke="#8cc98a" strokeWidth="14" />
    <Houses />
    <g fill="#d9d0c9" stroke="#c6b5a6" strokeWidth="3">
      {BLOCKS.map((points) => <polygon key={points} points={points} />)}
      <path d="M320 850Q390 860 390 920 380 975 330 980 270 970 265 905L300 905Q305 935 330 935 355 930 350 900L320 880Z" />
    </g>
    <g fill="#cdebb0" stroke="#b4d68f" strokeWidth="2">
      {LAWNS.map((points) => <polygon key={points} points={points} />)}
    </g>
    <g fill="none" strokeLinecap="round" strokeLinejoin="round">
      {ROADS.map(([d, w]) => <path key={d} d={d} stroke="#c4c4c4" strokeWidth={w + 4} />)}
      {ROADS.map(([d, w]) => <path key={d} d={d} stroke="#fff" strokeWidth={w} />)}
      {MAJORS.map(([d, w, fill, edge]) => (
        <g key={d} strokeLinecap="butt">
          <path d={d} stroke={edge} strokeWidth={w + 5} />
          <path d={d} stroke={fill} strokeWidth={w} />
        </g>
      ))}
      <path d="M2750 1300L2670 1385 2540 1545 2460 1690" stroke="#a87d2c" strokeWidth="7" />
      <path d="M2380 585L2400 650Q2430 700 2520 740L2810 905 2830 925" stroke="#b58a35" strokeWidth="7" strokeDasharray="46 12" strokeLinecap="butt" />
      <path d="M2340 1800L2420 1780 2660 1690M2460 1815L2520 1785M2600 1780L2800 1700M2680 1790L2840 1720" stroke="#444" strokeWidth="4" />
      <path d="M1880 50L2110 285" stroke="#999" strokeWidth="3" />
      <path d="M1890 80Q1970 90 2000 130 2040 200 2050 240L2110 290" stroke="#c5c5c5" strokeWidth="6" strokeDasharray="10 10" />
    </g>
    {TURNING.map(([x, y, r]) => <circle key={x} cx={x} cy={y} r={r} fill="#fff" />)}
    <g fill="none">
      {BOUNDARY.map((d) => <path key={d} d={d} stroke="#b79fbd" strokeWidth="5" strokeDasharray="14 10 4 10" />)}
      {FOOT.map((d) => <path key={d} d={d} stroke="#fa8072" strokeWidth="6" strokeDasharray="13 9" />)}
      {CYCLE.map((d) => <path key={d} d={d} stroke="#4a4aff" strokeWidth="6" strokeDasharray="14 12" />)}
    </g>
    <g fill="none" stroke="#6f9a68" strokeWidth="3" opacity="0.6">
      {TREES.map(([x, y]) => (
        <path key={`${x}-${y}`} d={`M${x - 12} ${y + 20}V${y - 2}M${x - 12} ${y - 16}a9 11 0 1 0 .1 0M${x + 12} ${y - 15}L${x + 3} ${y + 10}H${x + 21}ZM${x + 12} ${y + 10}V${y + 22}`} />
      ))}
    </g>
    {PARKING.map(([x, y]) => (
      <text key={x} x={x} y={y + 22} fontSize="70" fill="#8cc8ea" textAnchor="middle">P</text>
    ))}
    <g fill="#8cc98a">
      {[[328, 1303], [347, 1290], [369, 1273], [390, 1258], [407, 1244], [343, 1143], [30, 1368], [518, 1342], [475, 1377], [435, 1405], [396, 1432], [158, 1588]].map(([x, y]) => (
        <circle key={x} cx={x} cy={y} r="5" />
      ))}
    </g>
    <path d="M1973 0V60M1952 22H1994" stroke="#000" strokeWidth="9" />
    {ONEWAY.map(([x, y, a, color], i) => (
      <g key={i} transform={`translate(${x} ${y}) rotate(${a})`}>
        <path d="M-25 0H10" stroke={color} strokeWidth="6" />
        <path d="M4 -11L26 0 4 11Z" fill={color} />
      </g>
    ))}
    {STOPS.map(([x, y]) => <rect key={x} x={x - 13} y={y - 13} width="26" height="26" fill="#0092da" />)}
    <g fontSize="40" stroke="#fff" strokeOpacity="0.75" strokeWidth="7" strokeLinejoin="round" paintOrder="stroke" fill="#2b2b2b">
      {LABELS.map(([text, x, y, angle, length, size = 40, color = "#2b2b2b", italic], i) => (
        <text
          key={i}
          transform={`translate(${x} ${y}) rotate(${angle})`}
          y={size * 0.33}
          fontSize={size}
          fill={color}
          fontStyle={italic ? "italic" : "normal"}
          textAnchor="middle"
          textLength={length}
          lengthAdjust="spacingAndGlyphs"
        >
          {text}
        </text>
      ))}
      <text><textPath href="#mecklenbecker" textLength="425">Mecklenbecker Straße</textPath></text>
      <text><textPath href="#ossenkamp-a" textLength="325">Ossenkampstiege</textPath></text>
      <text><textPath href="#ossenkamp-b" textLength="335">Ossenkampstiege</textPath></text>
      <text fill="#8d6a97"><textPath href="#mitte-sued" textLength="195">Mitte-Süd</textPath></text>
    </g>
    <rect x="469" y="64" width="120" height="84" rx="8" fill="#eeecee" stroke="#c2c0c2" strokeWidth="4" />
    <text x="529" y="123" fontSize="46" fill="#555" textAnchor="middle">K 2</text>
    <rect x="2316" y="1711" width="148" height="80" rx="8" fill="#ecc4cd" stroke="#dba6b3" strokeWidth="4" />
    <text x="2390" y="1768" fontSize="46" fill="#6b2141" textAnchor="middle">B 51</text>
    <path d="M1352 938L1426 942 1420 1022Q1406 972 1352 938Z" fill="#0cd1e8" stroke="#fff" strokeWidth="3" />
    <circle cx="1340" cy="1030" r="54" fill="#0cd1e8" stroke="#fff" strokeWidth="14" />
    <circle cx="110" cy="1708" r="61" fill="#999" opacity="0.75" />
    <circle cx="110" cy="1708" r="52" fill="#fff" />
    <path d="M86 1739Q77 1705 90 1690 108 1671 132 1684 148 1704 136 1724 118 1744 86 1739Z" fill="#8d8d8d" />
    <path d="M117 1685L122 1699 136 1704 122 1709 117 1723 112 1709 98 1704 112 1699Z" fill="#fff" />
    <text x="185" y="1737" fontSize="90" fontWeight="700" fill="#fff" stroke="#a0a0a0" strokeWidth="16" strokeLinejoin="round" paintOrder="stroke" textLength="375" lengthAdjust="spacingAndGlyphs">mapbox</text>
  </MapCanvas>
);

const SatelliteIcon = () => (
  <svg width="42" height="42" viewBox="0 0 42 42" fill="none" stroke="#000" strokeWidth="1.600" strokeLinejoin="round" strokeLinecap="round">
    <g transform="rotate(-45 30 9)">
      <rect x="23" y="4.500" width="14" height="9" rx="1.500" />
      <path d="M23 9H37M27.700 4.500V13.500M32.300 4.500V13.500" />
    </g>
    <g transform="rotate(-45 8 29.500)">
      <rect x="1" y="25" width="14" height="9" rx="1.500" />
      <path d="M1 29.500H15M5.700 25V34M10.300 25V34" />
    </g>
    <rect x="14" y="9" width="9" height="20" rx="4" transform="rotate(-38 18.500 19)" />
    <path d="M16 16L20 21M23 15.500L25 13.500M12 25L14.500 22.500M24 35L23 29Q25 25 31 24L35 26Q27 27 24 35ZM32 35Q34.500 34.500 35.500 31.500M33.500 37.800Q37.500 37 38.300 32M34.500 40.800Q40.500 39.500 41 33" />
  </svg>
);

const tasks = [
  { title: "Navigation zur Zielfahne", question: "Gehe zur Fahne." },
  { title: "Navigation mit Richtungspfeil", question: "Folge dem Pfeil bis zum Ziel." },
  {},
  {},
] as { title?: string; question?: string }[];

export default function App() {
  return (
    <>
      <GlobalStyle />
      <Page>
        <Header>
          <StatusBar>
            <StatusGroup $gap={22}>
              <span>15:34</span>
              <span>Dienstag 17. Sept.</span>
            </StatusGroup>
            <StatusGroup $gap={6}>
              <Dot />
              <Dot />
              <Dot />
            </StatusGroup>
            <StatusGroup $gap={8} $end>
              <svg width="34" height="20" viewBox="0 0 34 20">
                <rect y="11" width="6" height="9" rx="2" />
                <rect x="9.300" y="8" width="6" height="12" rx="2" />
                <rect x="18.600" y="4" width="6" height="16" rx="2" />
                <rect x="28" width="6" height="20" rx="2" />
              </svg>
              <svg width="28" height="20" viewBox="0 0 28 20" fill="none" stroke="#000" strokeWidth="3.600">
                <path d="M1.300 6.800A18.500 18.500 0 0 1 26.700 6.800" />
                <path d="M6 11.600A12 12 0 0 1 22 11.600" />
                <path d="M14 20L9.700 15.500Q14 12 18.300 15.500Z" fill="#000" stroke="none" />
              </svg>
              <span>40 %</span>
              <svg width="54" height="26" viewBox="0 0 54 26">
                <rect x="1.200" y="2.200" width="46" height="21.600" rx="6.500" fill="none" stroke="#5a5a5a" strokeWidth="2.200" />
                <path d="M50 9Q53.500 10 53.500 13T50 17Z" fill="#5a5a5a" />
                <rect x="4" y="5" width="18" height="16" rx="3.500" fill="#34c759" />
                <path d="M28 0L15 14.500H22L19.500 26 33 11.300H25.500Z" stroke="#949494" strokeWidth="2.500" paintOrder="stroke" />
              </svg>
            </StatusGroup>
          </StatusBar>
          <NavBar>
            <BackButton>
              <svg width="26" height="42" viewBox="0 0 26 42" fill="none" stroke="#222428" strokeWidth="5" strokeLinecap="round" strokeLinejoin="round">
                <path d="M22 3.500L4 21 22 38.500" />
              </svg>
              Zurück
            </BackButton>
            <BarTitle $spacing={-0.52} $shift={6}>Bearbeite "Navigation Beispiel Spiel"</BarTitle>
            <BarEnd>
              <SaveIcon />
            </BarEnd>
          </NavBar>
        </Header>
        <Content>
          <Card $height={477} $top={41}>
            <CardLabel>Liste der erstellten Aufgaben:</CardLabel>
            {tasks.map((task, i) => (
              <TaskRow key={i}>
                <Pin n={i + 1} />
                <Chips>
                  {task.title && (
                    <Chip $primary>
                      <Arrow size={24} />
                      {task.title}
                    </Chip>
                  )}
                  {task.question && (
                    <Chip>
                      <b>Question:</b>
                      <span>{task.question}</span>
                    </Chip>
                  )}
                </Chips>
                <Cross size={30} color="#000" width={5.500} />
              </TaskRow>
            ))}
          </Card>
          <Card $height={219} $top={41}>
            <CardLabel>Wähle a</CardLabel>
            <PickerRow>
              <Chip $primary $width={200}>
                <Arrow size={34} />
              </Chip>
              <MenuChip>
                <svg width="28" height="17" viewBox="0 0 28 17" stroke="#222428" strokeWidth="4" strokeLinecap="round">
                  <path d="M2 2.200H26M2 8.500H26M2 14.800H26" />
                </svg>
              </MenuChip>
            </PickerRow>
          </Card>
        </Content>
        <Footer>
          <DeleteButton>
            <svg width="34" height="40" viewBox="0 0 34 40" fill="none" stroke="#fff" strokeWidth="2.200" strokeLinecap="round" strokeLinejoin="round">
              <path d="M1 7.500H33M11 7V4Q11 1.200 13.500 1.200H20.500Q23 1.200 23 4V7M4 8L6.500 36Q6.800 38.800 9.500 38.800H24.500Q27.200 38.800 27.500 36L30 8M11 13L12 33M17 13V33M23 13L22 33" />
            </svg>
            Delete Game
          </DeleteButton>
        </Footer>
      </Page>
      <Backdrop>
        <Modal>
          <ModalHeader>
            <Cross size={30} color="#222428" width={4.500} />
            <BarTitle $spacing={-0.64} $shift={0}>
              <Clipboard viewBox="0 0 24 33">
                <path d="M7 2Q7 0 9 0H15Q17 0 17 2H20A4 4 0 0 1 24 6V29A4 4 0 0 1 20 33H4A4 4 0 0 1 0 29V6A4 4 0 0 1 4 2Z" fill="#0cd1e8" />
                <path d="M8 5H16" stroke="#fff" strokeWidth="2" strokeLinecap="round" />
              </Clipboard>
              Themenaufgaben
            </BarTitle>
            <BarEnd>
              <SaveIcon />
            </BarEnd>
          </ModalHeader>
          <ModalBody>
            <SectionTitle $top={0} $spacing={-0.85}>
              Audiobotschaft <IoInformationCircle size={34} />
            </SectionTitle>
            <AudioRow>
              <AudioButton>
                <RecordDot />
              </AudioButton>
              <AudioButton>
                <IoDocumentOutline size={44} />
              </AudioButton>
              <AudioButton $disabled>
                <IoVolumeMediumOutline size={43} />
              </AudioButton>
            </AudioRow>
            <SectionTitle $top={40} $spacing={-0.82}>
              Richtung auf der Karte <IoInformationCircle size={34} />
            </SectionTitle>
            <MapFrame>
              <CityMap />
              <MapControls>
                <ControlGroup>
                  <Control>
                    <SatelliteIcon />
                  </Control>
                </ControlGroup>
                <ControlGroup>
                  <Control>
                    <svg width="24" height="24" stroke="#333" strokeWidth="5" strokeLinecap="round">
                      <path d="M2.500 12H21.500M12 2.500V21.500" />
                    </svg>
                  </Control>
                  <Control>
                    <svg width="24" height="24" stroke="#333" strokeWidth="5" strokeLinecap="round">
                      <path d="M2.500 12H21.500" />
                    </svg>
                  </Control>
                  <Control>
                    <svg width="16" height="36" viewBox="0 0 16 36">
                      <path d="M8 0L16 16H0Z" fill="#333" />
                      <path d="M8 36L16 20H0Z" fill="#ccc" />
                    </svg>
                  </Control>
                </ControlGroup>
              </MapControls>
              <MapInfo>
                <svg width="30" height="30" viewBox="0 0 30 30">
                  <circle cx="15" cy="15" r="14.500" />
                  <circle cx="15" cy="8.500" r="2.700" fill="#fff" />
                  <path d="M13 15H15.500V22M12.500 22.500H18" stroke="#fff" strokeWidth="3.600" strokeLinecap="round" strokeLinejoin="round" fill="none" />
                </svg>
              </MapInfo>
            </MapFrame>
            <ResetButton>Zurücksetzen</ResetButton>
            <SectionTitle $top={29} $spacing={-1}>Feedback</SectionTitle>
            <FieldLabel>Abweichung &lt; 45°</FieldLabel>
            <FieldBox>Probiere es noch einmal</FieldBox>
          </ModalBody>
        </Modal>
      </Backdrop>
    </>
  );
}
